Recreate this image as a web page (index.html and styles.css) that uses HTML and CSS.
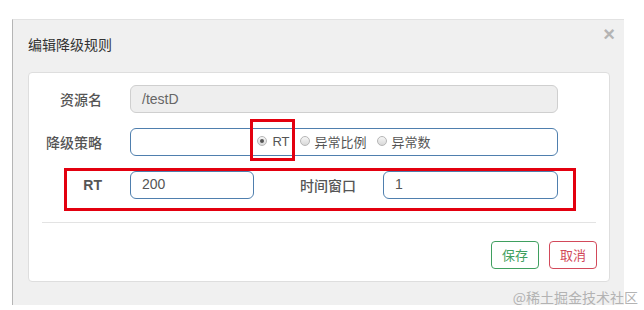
FILE: index.html
```html
<!DOCTYPE html>
<html lang="zh-CN">
<head>
  <meta charset="UTF-8">
  <title>编辑降级规则</title>
  <link rel="stylesheet" href="styles.css">
</head>
<body>

  <div class="dialog">
    <div class="dialog-head">
      <span class="title">编辑降级规则</span>
      <span class="close">×</span>
    </div>

    <div class="card">
      <div class="row">
        <label class="label">资源名</label>
        <div class="input disabled">/testD</div>
      </div>

      <div class="row">
        <label class="label">降级策略</label>
        <div class="input active radios">
          <span class="opt picked"><span class="dot on"></span>RT</span>
          <span class="opt"><span class="dot"></span>异常比例</span>
          <span class="opt"><span class="dot"></span>异常数</span>
        </div>
      </div>

      <!-- highlighted row -->
      <div class="row split marked">
        <label class="label latin">RT</label>
        <div class="input active">200</div>
        <label class="label wide">时间窗口</label>
        <div class="input active">1</div>
      </div>

      <div class="divider"></div>

      <div class="actions">
        <button class="btn save">保存</button>
        <button class="btn cancel">取消</button>
      </div>
    </div>
  </div>

  <div class="watermark">@稀土掘金技术社区</div>

</body>
</html>
```

FILE: styles.css
```css
body {
  margin: 0;
  background: #fff;
  font-family: "Liberation Sans", "Noto Sans CJK SC", sans-serif;
  font-size: 14px;
  color: #555;
}

.dialog {
  width: 612px;
  margin: 19px 0 0 12px;
  padding: 0 14px 23px 15px;
  box-sizing: border-box;
  background: #f0f0f0;
  border-left: 1px solid #b5b5b5;
  border-top: 1px solid #e2e2e2;
  box-shadow: 0 3px 0 #8d8d8d;
}

.dialog-head {
  display: flex;
  justify-content: space-between;
  height: 52px;
}

.title {
  padding-top: 14px;
  font-family: "Noto Sans CJK SC", sans-serif;
  font-size: 14px;
  line-height: 20px;
  color: #333;
}

.close {
  margin: 2px -5px 0 0;
  font-size: 20px;
  font-weight: bold;
  line-height: 24px;
  color: #b4b4b4;
}

.card {
  background: #fff;
  border: 1px solid #dedede;
  border-radius: 4px;
  padding: 12px 13px 12px 13px;
}

.row {
  display: grid;
  grid-template-columns: 88px 428px;
  align-items: center;
  margin-bottom: 15px;
}

.row.split {
  grid-template-columns: 88px 124px 129px 175px;
  margin-bottom: 0;
}

.label {
  padding-right: 28px;
  text-align: right;
  font-family: "Noto Sans CJK SC", sans-serif;
  font-weight: 500;
  font-size: 14px;
  color: #555;
}

.label.latin {
  font-family: "Liberation Sans", sans-serif;
  font-weight: bold;
}

.label.wide {
  padding-right: 27px;
}

.input {
  height: 28px;
  box-sizing: border-box;
  border: 1px solid #cfcfcf;
  border-radius: 6px;
  padding: 0 11px;
  display: flex;
  align-items: center;
  font-size: 14px;
  color: #555;
}

.input.disabled {
  background: #eee;
  color: #666;
}

.input.active {
  border-color: #4f7fae;
  padding-bottom: 2px;
}

.radios {
  justify-content: center;
  gap: 10px;
  font-size: 13px;
  color: #555;
}

.opt {
  display: flex;
  align-items: center;
  gap: 5px;
  position: relative;
  height: 16px;
}

.dot {
  width: 10px;
  height: 10px;
  border: 1px solid #b6b6b6;
  border-radius: 50%;
  background: linear-gradient(#f6f6f6, #d8d8d8);
  box-sizing: border-box;
  display: flex;
  align-items: center;
  justify-content: center;
}

.dot.on::before {
  content: "";
  width: 4px;
  height: 4px;
  border-radius: 50%;
  background: #555;
}

/* red annotation boxes */
.opt.picked::after {
  content: "";
  position: absolute;
  left: -7px;
  right: -5px;
  top: -14px;
  bottom: -12px;
  border: 3px solid #e3000f;
}

.marked {
  position: relative;
}

.marked::after {
  content: "";
  position: absolute;
  left: 22px;
  right: 20px;
  top: -3px;
  bottom: -12px;
  border: 3px solid #e3000f;
}

.divider {
  margin-top: 23px;
  border-top: 1px solid #e3e3e3;
}

.actions {
  display: flex;
  justify-content: flex-end;
  gap: 10px;
  margin-top: 18px;
  margin-right: -1px;
}

.btn {
  height: 28px;
  padding: 0 10px;
  background: #fff;
  border-radius: 4px;
  font-family: "Noto Sans CJK SC", sans-serif;
  font-size: 13px;
  line-height: 24px;
}

.btn.save {
  border: 1px solid #3f9f5f;
  color: #3f9f5f;
}

.btn.cancel {
  border: 1px solid #d2495a;
  color: #d2495a;
}

.watermark {
  position: absolute;
  right: 6px;
  top: 287px;
  font-family: "Noto Sans CJK SC", sans-serif;
  font-size: 14px;
  color: #b3b3b3;
}
```
